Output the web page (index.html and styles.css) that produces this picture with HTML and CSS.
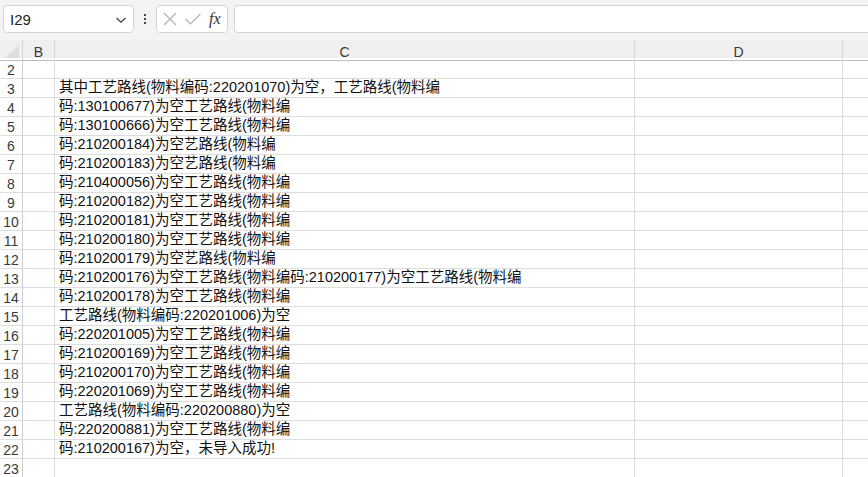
FILE: index.html
```html
<!DOCTYPE html>
<html>
<head>
<meta charset="utf-8">
<link rel="stylesheet" href="styles.css">
</head>
<body>
<div class="app">
  <div class="topbar">
    <div class="namebox">
      <span class="cellref">I29</span>
      <svg class="chev" width="12" height="8" viewBox="0 0 12 8"><path d="M1.5 2 L6 6.2 L10.5 2" fill="none" stroke="#444" stroke-width="1.3"/></svg>
    </div>
    <div class="vdots"><span></span><span></span><span></span></div>
    <div class="fxbox">
      <svg width="16" height="16" viewBox="0 0 16 16"><path d="M2 2 L14 14 M14 2 L2 14" stroke="#b4b4b4" stroke-width="1.2" fill="none"/></svg>
      <svg width="18" height="16" viewBox="0 0 18 16"><path d="M1.5 8 L6.5 13 L16.5 3" stroke="#b4b4b4" stroke-width="1.2" fill="none"/></svg>
      <span class="fx">fx</span>
    </div>
    <div class="formula"></div>
  </div>
  <div class="sheet">
    <div class="row head">
      <div class="corner"><svg width="14" height="13" viewBox="0 0 14 13"><path d="M14 0 L14 13 L0 13 Z" fill="#dedede"/></svg></div>
      <div class="ch">B</div>
      <div class="ch">C</div>
      <div class="ch">D</div>
      <div class="ch last"></div>
    </div>
    <div class="row"><div class="rh">2</div><div class="c"></div><div class="c"></div><div class="c"></div><div class="c last"></div></div>
    <div class="row"><div class="rh">3</div><div class="c"></div><div class="c t">其中工艺路线(物料编码:220201070)为空，工艺路线(物料编</div><div class="c"></div><div class="c last"></div></div>
    <div class="row"><div class="rh">4</div><div class="c"></div><div class="c t">码:130100677)为空工艺路线(物料编</div><div class="c"></div><div class="c last"></div></div>
    <div class="row"><div class="rh">5</div><div class="c"></div><div class="c t">码:130100666)为空工艺路线(物料编</div><div class="c"></div><div class="c last"></div></div>
    <div class="row"><div class="rh">6</div><div class="c"></div><div class="c t">码:210200184)为空艺路线(物料编</div><div class="c"></div><div class="c last"></div></div>
    <div class="row"><div class="rh">7</div><div class="c"></div><div class="c t">码:210200183)为空艺路线(物料编</div><div class="c"></div><div class="c last"></div></div>
    <div class="row"><div class="rh">8</div><div class="c"></div><div class="c t">码:210400056)为空工艺路线(物料编</div><div class="c"></div><div class="c last"></div></div>
    <div class="row"><div class="rh">9</div><div class="c"></div><div class="c t">码:210200182)为空工艺路线(物料编</div><div class="c"></div><div class="c last"></div></div>
    <div class="row"><div class="rh">10</div><div class="c"></div><div class="c t">码:210200181)为空工艺路线(物料编</div><div class="c"></div><div class="c last"></div></div>
    <div class="row"><div class="rh">11</div><div class="c"></div><div class="c t">码:210200180)为空工艺路线(物料编</div><div class="c"></div><div class="c last"></div></div>
    <div class="row"><div class="rh">12</div><div class="c"></div><div class="c t">码:210200179)为空艺路线(物料编</div><div class="c"></div><div class="c last"></div></div>
    <div class="row"><div class="rh">13</div><div class="c"></div><div class="c t">码:210200176)为空工艺路线(物料编码:210200177)为空工艺路线(物料编</div><div class="c"></div><div class="c last"></div></div>
    <div class="row"><div class="rh">14</div><div class="c"></div><div class="c t">码:210200178)为空工艺路线(物料编</div><div class="c"></div><div class="c last"></div></div>
    <div class="row"><div class="rh">15</div><div class="c"></div><div class="c t">工艺路线(物料编码:220201006)为空</div><div class="c"></div><div class="c last"></div></div>
    <div class="row"><div class="rh">16</div><div class="c"></div><div class="c t">码:220201005)为空工艺路线(物料编</div><div class="c"></div><div class="c last"></div></div>
    <div class="row"><div class="rh">17</div><div class="c"></div><div class="c t">码:210200169)为空工艺路线(物料编</div><div class="c"></div><div class="c last"></div></div>
    <div class="row"><div class="rh">18</div><div class="c"></div><div class="c t">码:210200170)为空工艺路线(物料编</div><div class="c"></div><div class="c last"></div></div>
    <div class="row"><div class="rh">19</div><div class="c"></div><div class="c t">码:220201069)为空工艺路线(物料编</div><div class="c"></div><div class="c last"></div></div>
    <div class="row"><div class="rh">20</div><div class="c"></div><div class="c t">工艺路线(物料编码:220200880)为空</div><div class="c"></div><div class="c last"></div></div>
    <div class="row"><div class="rh">21</div><div class="c"></div><div class="c t">码:220200881)为空工艺路线(物料编</div><div class="c"></div><div class="c last"></div></div>
    <div class="row"><div class="rh">22</div><div class="c"></div><div class="c t">码:210200167)为空，未导入成功!</div><div class="c"></div><div class="c last"></div></div>
    <div class="row"><div class="rh">23</div><div class="c"></div><div class="c"></div><div class="c"></div><div class="c last"></div></div>
  </div>
</div>
</body>
</html>
```
FILE: styles.css
```css
* { box-sizing: border-box; }
html, body { margin: 0; padding: 0; }
body {
  width: 868px;
  height: 477px;
  overflow: hidden;
  background: #fff;
  font-family: "Liberation Sans", "Noto Sans CJK SC", sans-serif;
  color: #1a1a1a;
}
.app { width: 868px; }
.topbar {
  height: 40px;
  background: #f3f3f3;
  display: flex;
  align-items: flex-start;
  padding: 5px 0 0 3px;
}
.namebox {
  width: 131px;
  height: 28px;
  background: #fff;
  border: 1px solid #d6d6d6;
  border-radius: 4px;
  display: flex;
  align-items: center;
  justify-content: space-between;
  padding: 0 6px 0 6px;
}
.cellref { font-size: 15px; color: #222; }
.chev { margin-top: 1px; }
.vdots {
  width: 22px;
  height: 28px;
  display: flex;
  flex-direction: column;
  align-items: center;
  justify-content: center;
  gap: 2px;
}
.vdots span { width: 2px; height: 2px; background: #444; display: block; }
.fxbox {
  width: 72px;
  height: 28px;
  background: #fff;
  border: 1px solid #d6d6d6;
  border-radius: 4px;
  display: flex;
  align-items: center;
  padding: 0 0 0 5px;
  gap: 6px;
}
.fx {
  font-family: "Liberation Serif", "DejaVu Serif", serif;
  font-style: italic;
  font-size: 16px;
  color: #333;
  margin-left: 1px;
}
.formula {
  flex: 1;
  margin-left: 6px;
  height: 28px;
  background: #fff;
  border: 1px solid #d6d6d6;
  border-right: none;
  border-radius: 4px 0 0 4px;
}
.sheet { width: 868px; }
.row {
  display: grid;
  grid-template-columns: 23px 32px 580px 208px 1fr;
  height: 19px;
}
.row.head { height: 18px; background: #efefef; }
.corner, .ch {
  border-right: 1px solid #d6d6d6;
  border-bottom: 1px solid #bdbdbd;
  font-size: 14px;
  color: #3a3a3a;
  display: flex;
  align-items: center;
  justify-content: center;
  padding-top: 4px;
}
.corner { justify-content: flex-end; align-items: flex-end; padding: 0 3px 2px 0; }
.rh {
  border-right: 1px solid #cfcfcf;
  border-bottom: 1px solid #dedede;
  font-size: 14px;
  color: #3a3a3a;
  display: flex;
  align-items: center;
  justify-content: center;
  padding-top: 4px;
}
.c {
  border-right: 1px solid #dedede;
  border-bottom: 1px solid #dedede;
}
.last { border-right: none; }
.t {
  font-size: 14.5px;
  line-height: 17px;
  padding-top: 2px;
  padding-left: 4px;
  white-space: nowrap;
  color: #111;
}
```
